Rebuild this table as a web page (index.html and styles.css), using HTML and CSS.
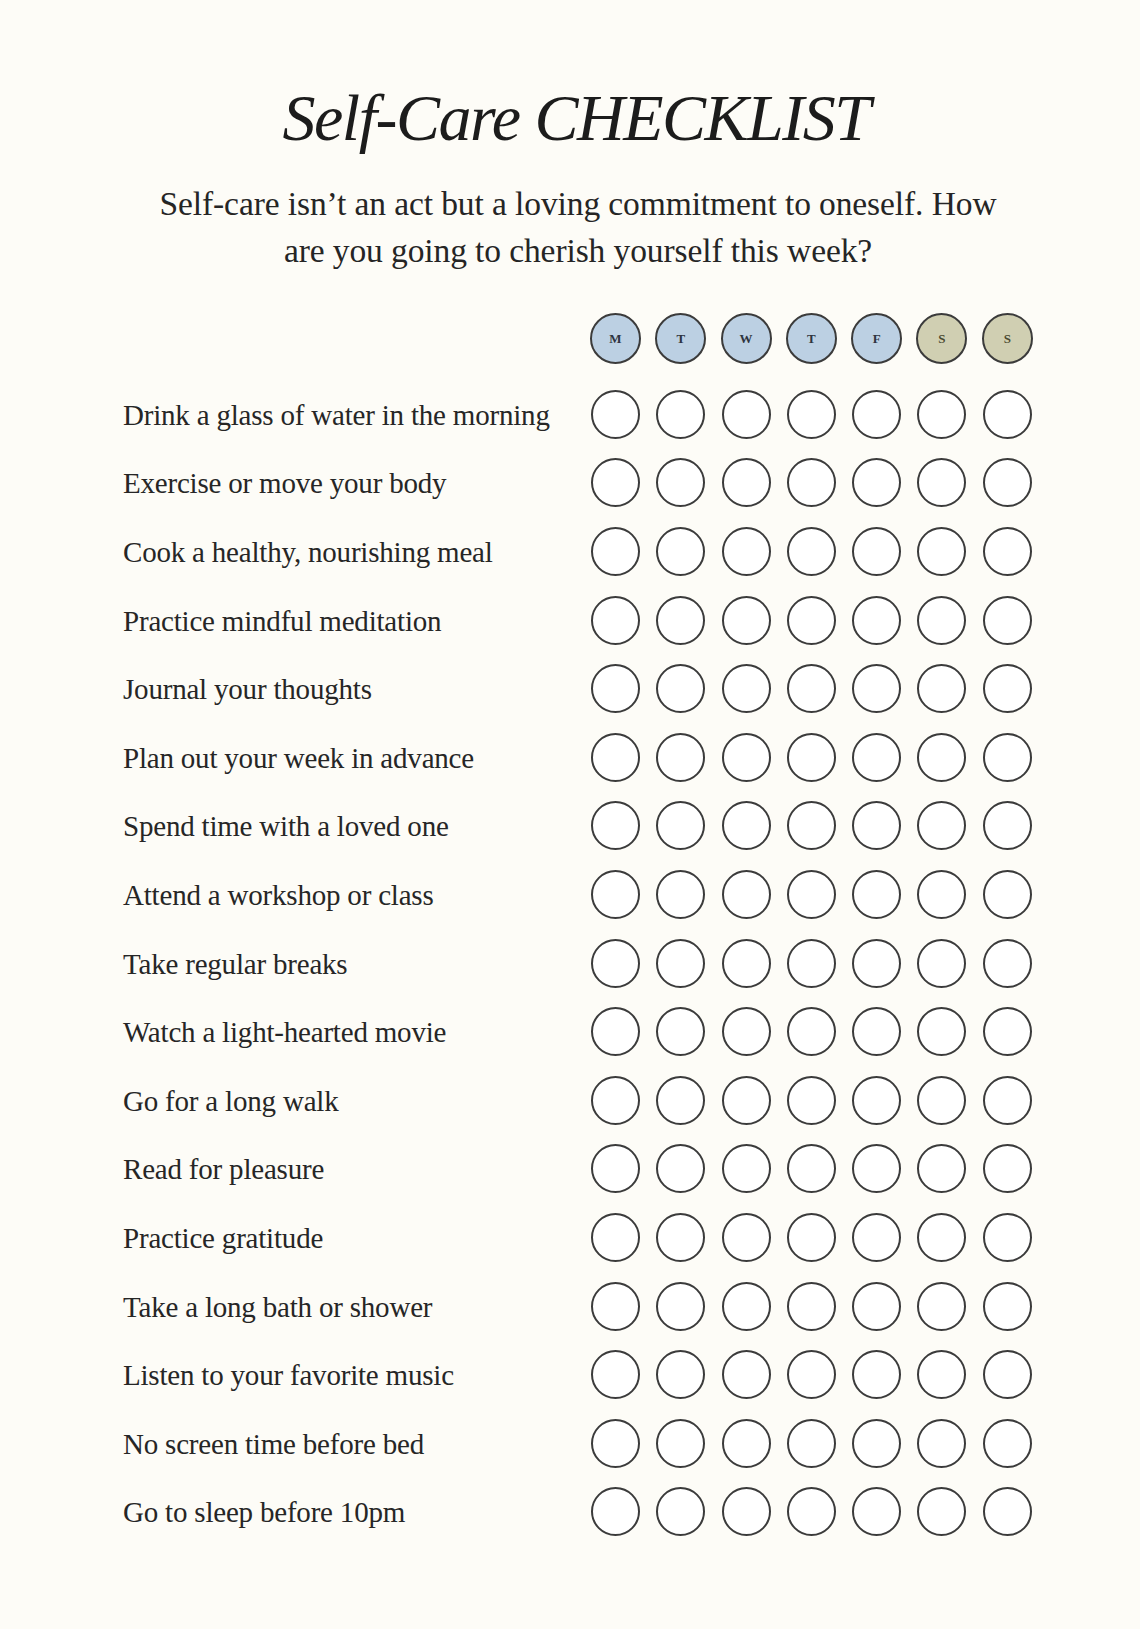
FILE: index.html
```html
<!DOCTYPE html>
<html lang="en">
<head>
<meta charset="utf-8">
<title>Self-Care Checklist</title>
<link rel="stylesheet" href="styles.css">
</head>
<body>
<main class="sheet">
  <h1 class="title">Self-Care CHECKLIST</h1>
  <p class="intro">Self-care isn’t an act but a loving commitment to oneself. How<br>are you going to cherish yourself this week?</p>

  <div class="grid">
    <div class="row head">
      <div class="label"></div>
      <div class="dots">
        <span class="dot day">M</span>
        <span class="dot day">T</span>
        <span class="dot day">W</span>
        <span class="dot day">T</span>
        <span class="dot day">F</span>
        <span class="dot end">S</span>
        <span class="dot end">S</span>
      </div>
    </div>

    <div class="row"><div class="label">Drink a glass of water in the morning</div><div class="dots"><span class="dot"></span><span class="dot"></span><span class="dot"></span><span class="dot"></span><span class="dot"></span><span class="dot"></span><span class="dot"></span></div></div>
    <div class="row"><div class="label">Exercise or move your body</div><div class="dots"><span class="dot"></span><span class="dot"></span><span class="dot"></span><span class="dot"></span><span class="dot"></span><span class="dot"></span><span class="dot"></span></div></div>
    <div class="row"><div class="label">Cook a healthy, nourishing meal</div><div class="dots"><span class="dot"></span><span class="dot"></span><span class="dot"></span><span class="dot"></span><span class="dot"></span><span class="dot"></span><span class="dot"></span></div></div>
    <div class="row"><div class="label">Practice mindful meditation</div><div class="dots"><span class="dot"></span><span class="dot"></span><span class="dot"></span><span class="dot"></span><span class="dot"></span><span class="dot"></span><span class="dot"></span></div></div>
    <div class="row"><div class="label">Journal your thoughts</div><div class="dots"><span class="dot"></span><span class="dot"></span><span class="dot"></span><span class="dot"></span><span class="dot"></span><span class="dot"></span><span class="dot"></span></div></div>
    <div class="row"><div class="label">Plan out your week in advance</div><div class="dots"><span class="dot"></span><span class="dot"></span><span class="dot"></span><span class="dot"></span><span class="dot"></span><span class="dot"></span><span class="dot"></span></div></div>
    <div class="row"><div class="label">Spend time with a loved one</div><div class="dots"><span class="dot"></span><span class="dot"></span><span class="dot"></span><span class="dot"></span><span class="dot"></span><span class="dot"></span><span class="dot"></span></div></div>
    <div class="row"><div class="label">Attend a workshop or class</div><div class="dots"><span class="dot"></span><span class="dot"></span><span class="dot"></span><span class="dot"></span><span class="dot"></span><span class="dot"></span><span class="dot"></span></div></div>
    <div class="row"><div class="label">Take regular breaks</div><div class="dots"><span class="dot"></span><span class="dot"></span><span class="dot"></span><span class="dot"></span><span class="dot"></span><span class="dot"></span><span class="dot"></span></div></div>
    <div class="row"><div class="label">Watch a light-hearted movie</div><div class="dots"><span class="dot"></span><span class="dot"></span><span class="dot"></span><span class="dot"></span><span class="dot"></span><span class="dot"></span><span class="dot"></span></div></div>
    <div class="row"><div class="label">Go for a long walk</div><div class="dots"><span class="dot"></span><span class="dot"></span><span class="dot"></span><span class="dot"></span><span class="dot"></span><span class="dot"></span><span class="dot"></span></div></div>
    <div class="row"><div class="label">Read for pleasure</div><div class="dots"><span class="dot"></span><span class="dot"></span><span class="dot"></span><span class="dot"></span><span class="dot"></span><span class="dot"></span><span class="dot"></span></div></div>
    <div class="row"><div class="label">Practice gratitude</div><div class="dots"><span class="dot"></span><span class="dot"></span><span class="dot"></span><span class="dot"></span><span class="dot"></span><span class="dot"></span><span class="dot"></span></div></div>
    <div class="row"><div class="label">Take a long bath or shower</div><div class="dots"><span class="dot"></span><span class="dot"></span><span class="dot"></span><span class="dot"></span><span class="dot"></span><span class="dot"></span><span class="dot"></span></div></div>
    <div class="row"><div class="label">Listen to your favorite music</div><div class="dots"><span class="dot"></span><span class="dot"></span><span class="dot"></span><span class="dot"></span><span class="dot"></span><span class="dot"></span><span class="dot"></span></div></div>
    <div class="row"><div class="label">No screen time before bed</div><div class="dots"><span class="dot"></span><span class="dot"></span><span class="dot"></span><span class="dot"></span><span class="dot"></span><span class="dot"></span><span class="dot"></span></div></div>
    <div class="row"><div class="label">Go to sleep before 10pm</div><div class="dots"><span class="dot"></span><span class="dot"></span><span class="dot"></span><span class="dot"></span><span class="dot"></span><span class="dot"></span><span class="dot"></span></div></div>
  </div>
</main>
</body>
</html>
```
FILE: styles.css
```css
html, body {
  margin: 0;
  padding: 0;
  background: #fdfcf7;
}

body {
  font-family: "Liberation Serif", "Times New Roman", serif;
  color: #222222;
}

.sheet {
  width: 1140px;
  min-height: 1629px;
  box-sizing: border-box;
  padding: 78px 0 0 0;
}

.title {
  margin: 0;
  text-align: center;
  font-weight: normal;
  font-style: italic;
  font-size: 66px;
  line-height: 80px;
  letter-spacing: -1.5px;
  color: #1c1c1c;
  padding-left: 12px;
}

.intro {
  margin: 22px 0 0 0;
  text-align: center;
  font-size: 33.5px;
  line-height: 47px;
  letter-spacing: -0.1px;
  color: #252525;
  padding-left: 16px;
}

.grid {
  margin-top: 39px;
  padding-left: 123px;
  display: flex;
  flex-direction: column;
}

.row {
  display: flex;
  align-items: center;
  height: 68.6px;
}

.row.head {
  height: 51px;
  margin-bottom: 16px;
}

.label {
  width: 468px;
  font-size: 29px;
  letter-spacing: -0.2px;
  color: #262626;
  white-space: nowrap;
  padding-top: 2px;
}

.dots {
  display: flex;
  gap: 16.3px;
}

.dot {
  width: 49px;
  height: 49px;
  box-sizing: border-box;
  border: 2.5px solid #3b3b3b;
  border-radius: 50%;
  background: #ffffff;
  display: flex;
  align-items: center;
  justify-content: center;
  font-size: 13px;
  font-weight: bold;
  color: #2e3440;
}

.dot.day {
  width: 51px;
  height: 51px;
  margin: 0 -1px;
  background: #bcd0e3;
}

.dot.end {
  width: 51px;
  height: 51px;
  margin: 0 -1px;
  background: #d0cfb2;
  color: #4a4a30;
}
```
